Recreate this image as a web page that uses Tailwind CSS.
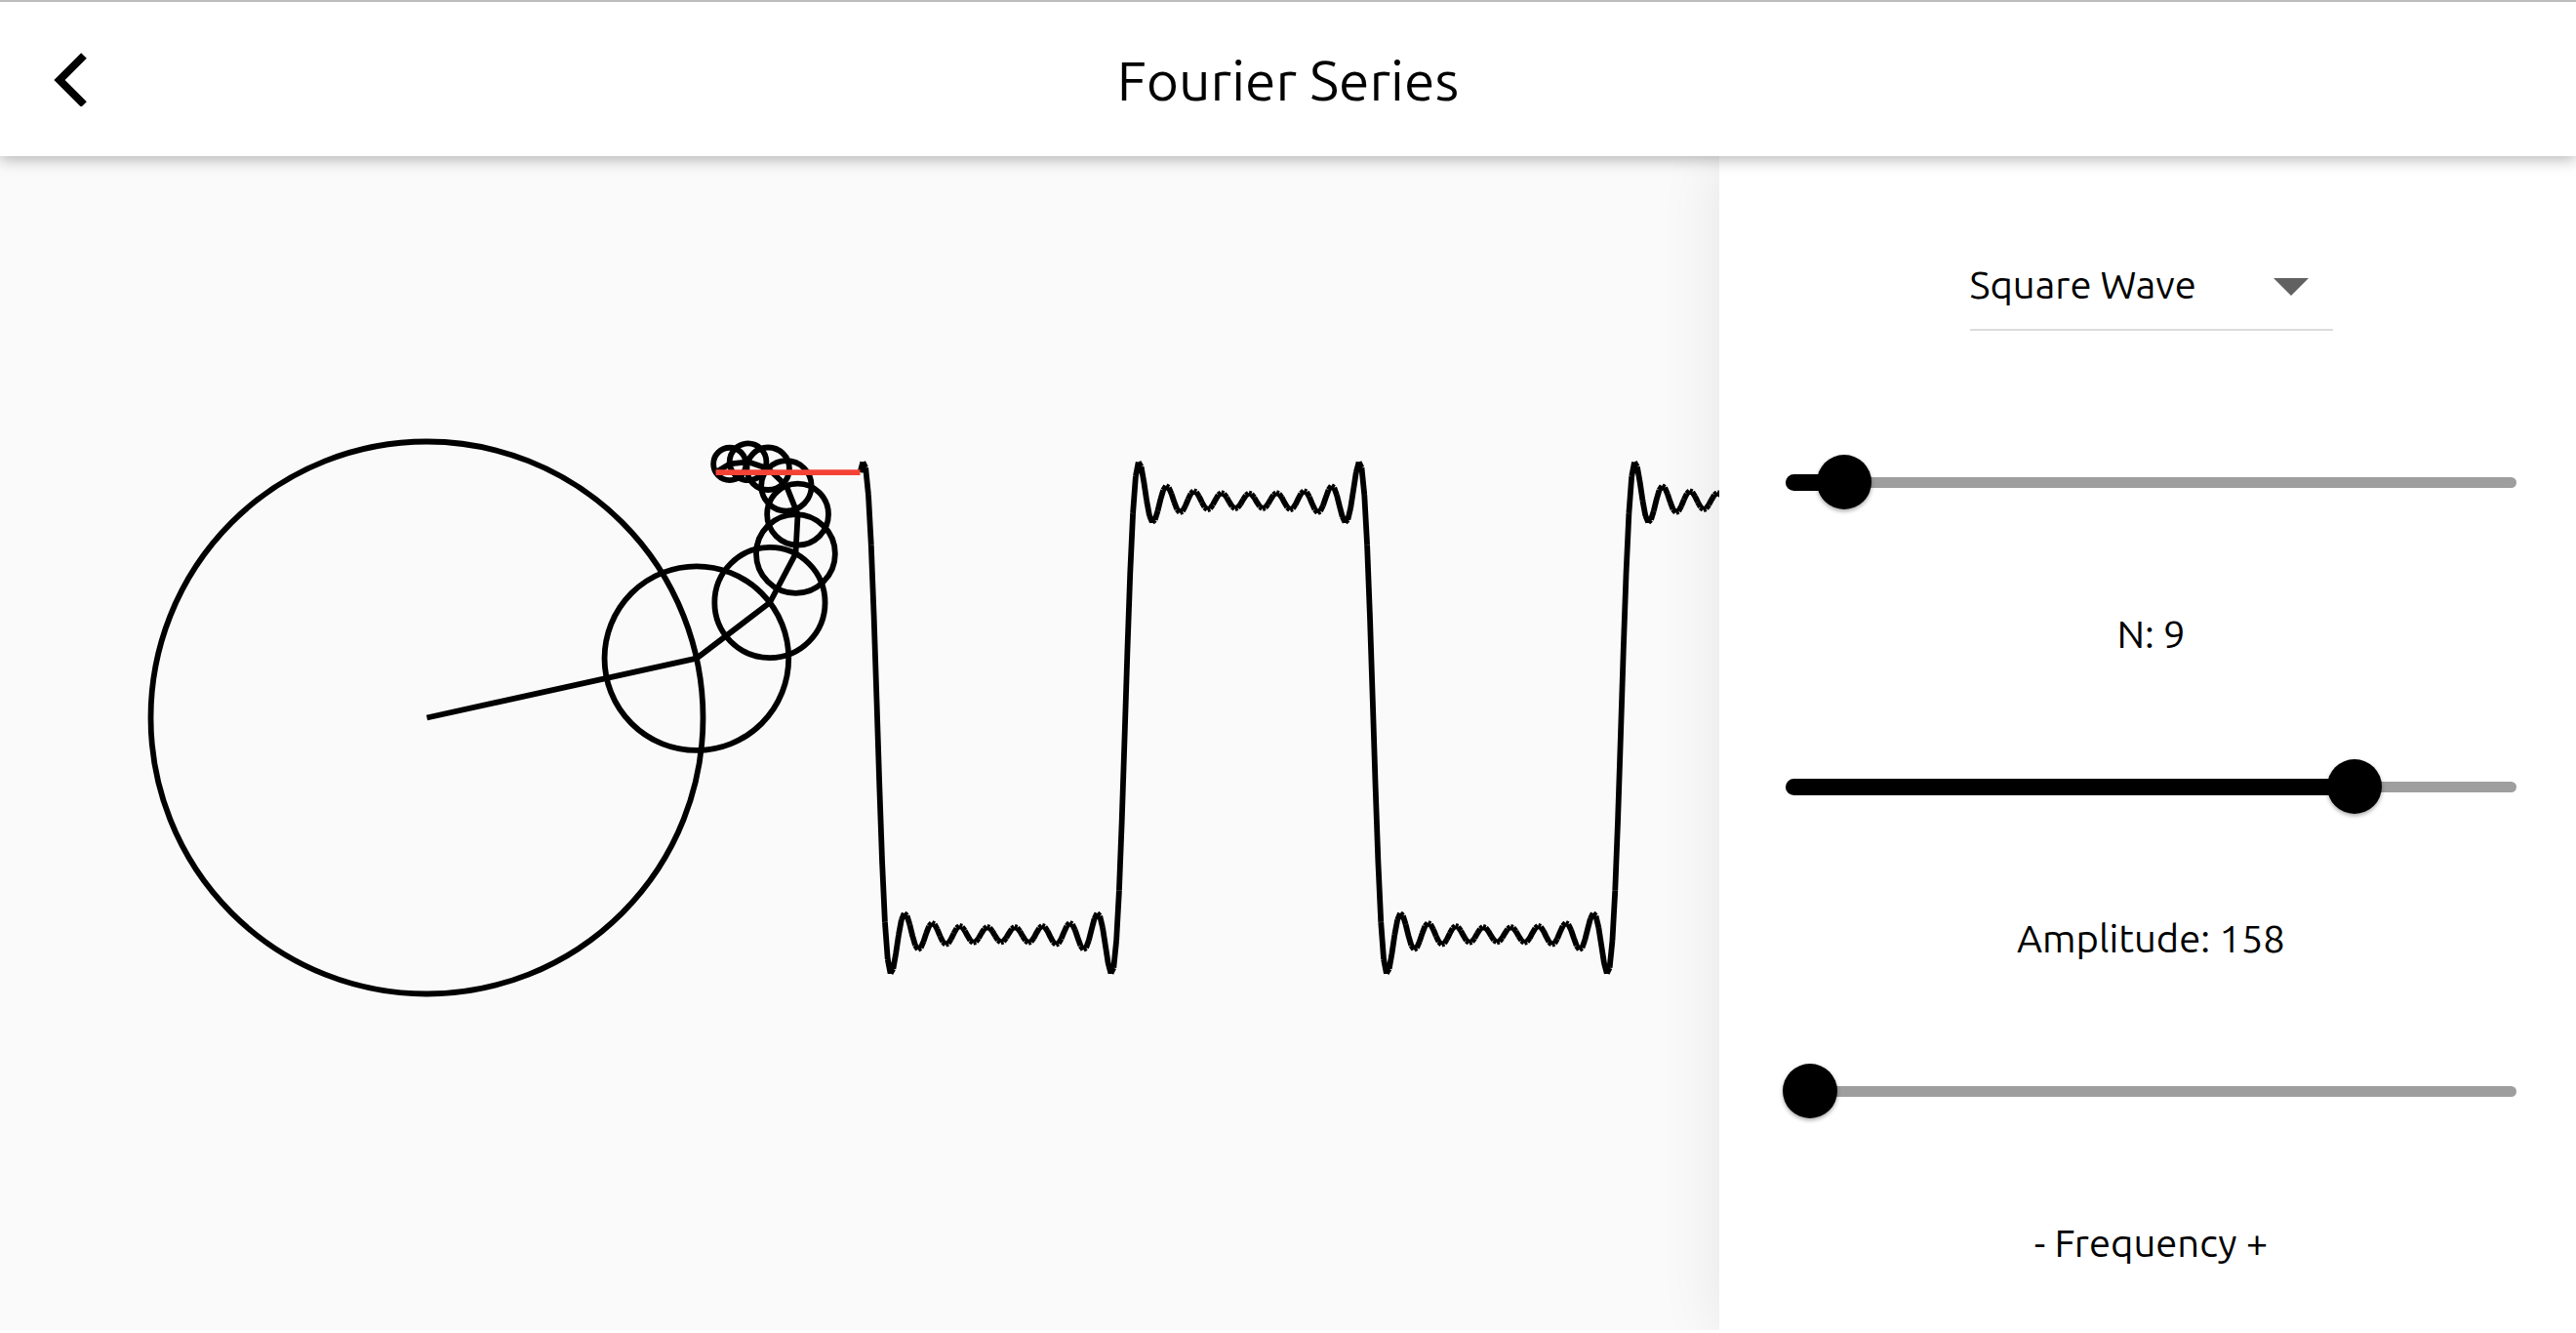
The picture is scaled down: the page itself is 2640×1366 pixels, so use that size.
<!DOCTYPE html>
<html lang="en">
<head>
<meta charset="utf-8">
<title>Fourier Series</title>
<script src="https://cdn.jsdelivr.net/npm/@tailwindcss/browser@4"></script>
</head>
<body class="flex h-screen flex-col overflow-hidden bg-white pb-[3px] font-['Ubuntu','Noto_Sans',sans-serif] text-black">
  <header class="relative z-20 grid h-40 shrink-0 grid-cols-[144px_1fr_144px] items-center border-t-2 border-[#bdbdbd] bg-white shadow-[0_4px_14px_rgba(0,0,0,0.27)]">
    <button type="button" aria-label="Back" class="flex h-full items-center pl-[55px]">
      <svg class="h-14 w-[34px]" viewBox="0 0 34 56" aria-hidden="true"><path d="M31 4 6 29l25 25" fill="none" stroke="#000" stroke-width="8"/></svg>
    </button>
    <h1 class="pt-0.5 text-center text-[57px] leading-[72px]">Fourier Series</h1>
  </header>

  <main class="grid min-h-0 flex-1 grid-cols-[881fr_439fr] overflow-hidden">
    <section class="min-h-0 min-w-0 overflow-hidden bg-[#fafafa]" aria-label="Wave drawing">
      <svg class="h-full w-full" viewBox="0 0 1762 1203" preserveAspectRatio="xMinYMid meet" fill="none" stroke="#000" stroke-width="5.8">
        <g id="circles"></g>
        <path id="arms"/>
        <path id="wave"/>
        <path id="link" stroke="#f44336"/>
      </svg>
    </section>

    <aside class="relative z-10 flex flex-col items-center bg-white pt-[86px] pr-[58px] pl-[65px] shadow-[0_0_60px_rgba(0,0,0,0.09)]">
      <div class="grid h-[93px] w-[372px] items-center border-b-2 border-[#dcdcdc]">
        <select aria-label="Wave type" class="h-full w-full appearance-none bg-transparent pt-px text-[40px] leading-[52px] [grid-area:1/1]">
          <option>Square Wave</option>
        </select>
        <svg class="pointer-events-none mt-1 mr-[25px] h-[18px] w-9 justify-self-end [grid-area:1/1]" viewBox="0 0 36 18" aria-hidden="true"><path d="M0 0h36L18 18z" fill="#616161"/></svg>
      </div>

      <div class="mt-[77px] flex w-full flex-col">
        <div class="grid h-[156px] items-center">
          <span class="mx-[3px] h-[11px] rounded-full bg-[#9e9e9e] [grid-area:1/1]"></span>
          <span class="ml-[3px] h-[17px] rounded-full bg-black [grid-area:1/1]" style="width:8%"></span>
          <input id="n" type="range" min="1" max="160" value="9" class="h-14 w-full appearance-none bg-transparent [grid-area:1/1] [&::-webkit-slider-thumb]:size-14 [&::-webkit-slider-thumb]:appearance-none [&::-webkit-slider-thumb]:rounded-full [&::-webkit-slider-thumb]:bg-black [&::-webkit-slider-thumb]:shadow-[0_2px_4px_rgba(0,0,0,0.35)]">
        </div>
        <label for="n" class="h-[156px] text-center text-[40px] leading-[156px]">N: 9</label>

        <div class="grid h-[156px] items-center">
          <span class="mx-[3px] h-[11px] rounded-full bg-[#9e9e9e] [grid-area:1/1]"></span>
          <span class="ml-[3px] h-[17px] rounded-full bg-black [grid-area:1/1]" style="width:78%"></span>
          <input id="amplitude" type="range" min="0" max="198" value="158" class="h-14 w-full appearance-none bg-transparent [grid-area:1/1] [&::-webkit-slider-thumb]:size-14 [&::-webkit-slider-thumb]:appearance-none [&::-webkit-slider-thumb]:rounded-full [&::-webkit-slider-thumb]:bg-black [&::-webkit-slider-thumb]:shadow-[0_2px_4px_rgba(0,0,0,0.35)]">
        </div>
        <label for="amplitude" class="h-[156px] text-center text-[40px] leading-[156px]">Amplitude: 158</label>

        <div class="grid h-[156px] items-center">
          <span class="mx-[3px] h-[11px] rounded-full bg-[#9e9e9e] [grid-area:1/1]"></span>
          <input id="frequency" type="range" min="0" max="100" value="0" class="h-14 w-full appearance-none bg-transparent [grid-area:1/1] [&::-webkit-slider-thumb]:size-14 [&::-webkit-slider-thumb]:appearance-none [&::-webkit-slider-thumb]:rounded-full [&::-webkit-slider-thumb]:bg-black [&::-webkit-slider-thumb]:shadow-[0_2px_4px_rgba(0,0,0,0.35)]">
        </div>
        <label for="frequency" class="h-[156px] text-center text-[40px] leading-[156px]">- Frequency +</label>
      </div>
    </aside>
  </main>

  <script>
    // Epicycles of a square wave and the trace they leave behind.
    const terms = 9, radius = 283, cx = 437.5, cy = 575.5, theta = 0.2168;
    const startX = 881.5, step = 2.824, dTheta = Math.PI / 90;
    const wave = t => {
      let s = 0;
      for (let k = 0; k < terms; k++) s += Math.sin((2 * k + 1) * t) / (2 * k + 1);
      return cy - radius * s;
    };
    let x = cx, y = cy, circles = '', arms = '';
    for (let k = 0; k < terms; k++) {
      const n = 2 * k + 1, r = radius / n;
      circles += `<circle cx="${x}" cy="${y}" r="${r}"/>`;
      arms += `M${x} ${y}`;
      x += r * Math.cos(n * theta);
      y -= r * Math.sin(n * theta);
      arms += `L${x} ${y}`;
    }
    let trace = '';
    for (let i = 0; startX + i * step < 1770; i++) {
      trace += `M${startX + i * step} ${wave(theta - i * dTheta)}L${startX + (i + 1) * step} ${wave(theta - (i + 1) * dTheta)}`;
    }
    document.getElementById('circles').innerHTML = circles;
    document.getElementById('arms').setAttribute('d', arms);
    document.getElementById('wave').setAttribute('d', trace);
    document.getElementById('link').setAttribute('d', `M${x} ${y}H${startX}`);
  </script>
</body>
</html>
